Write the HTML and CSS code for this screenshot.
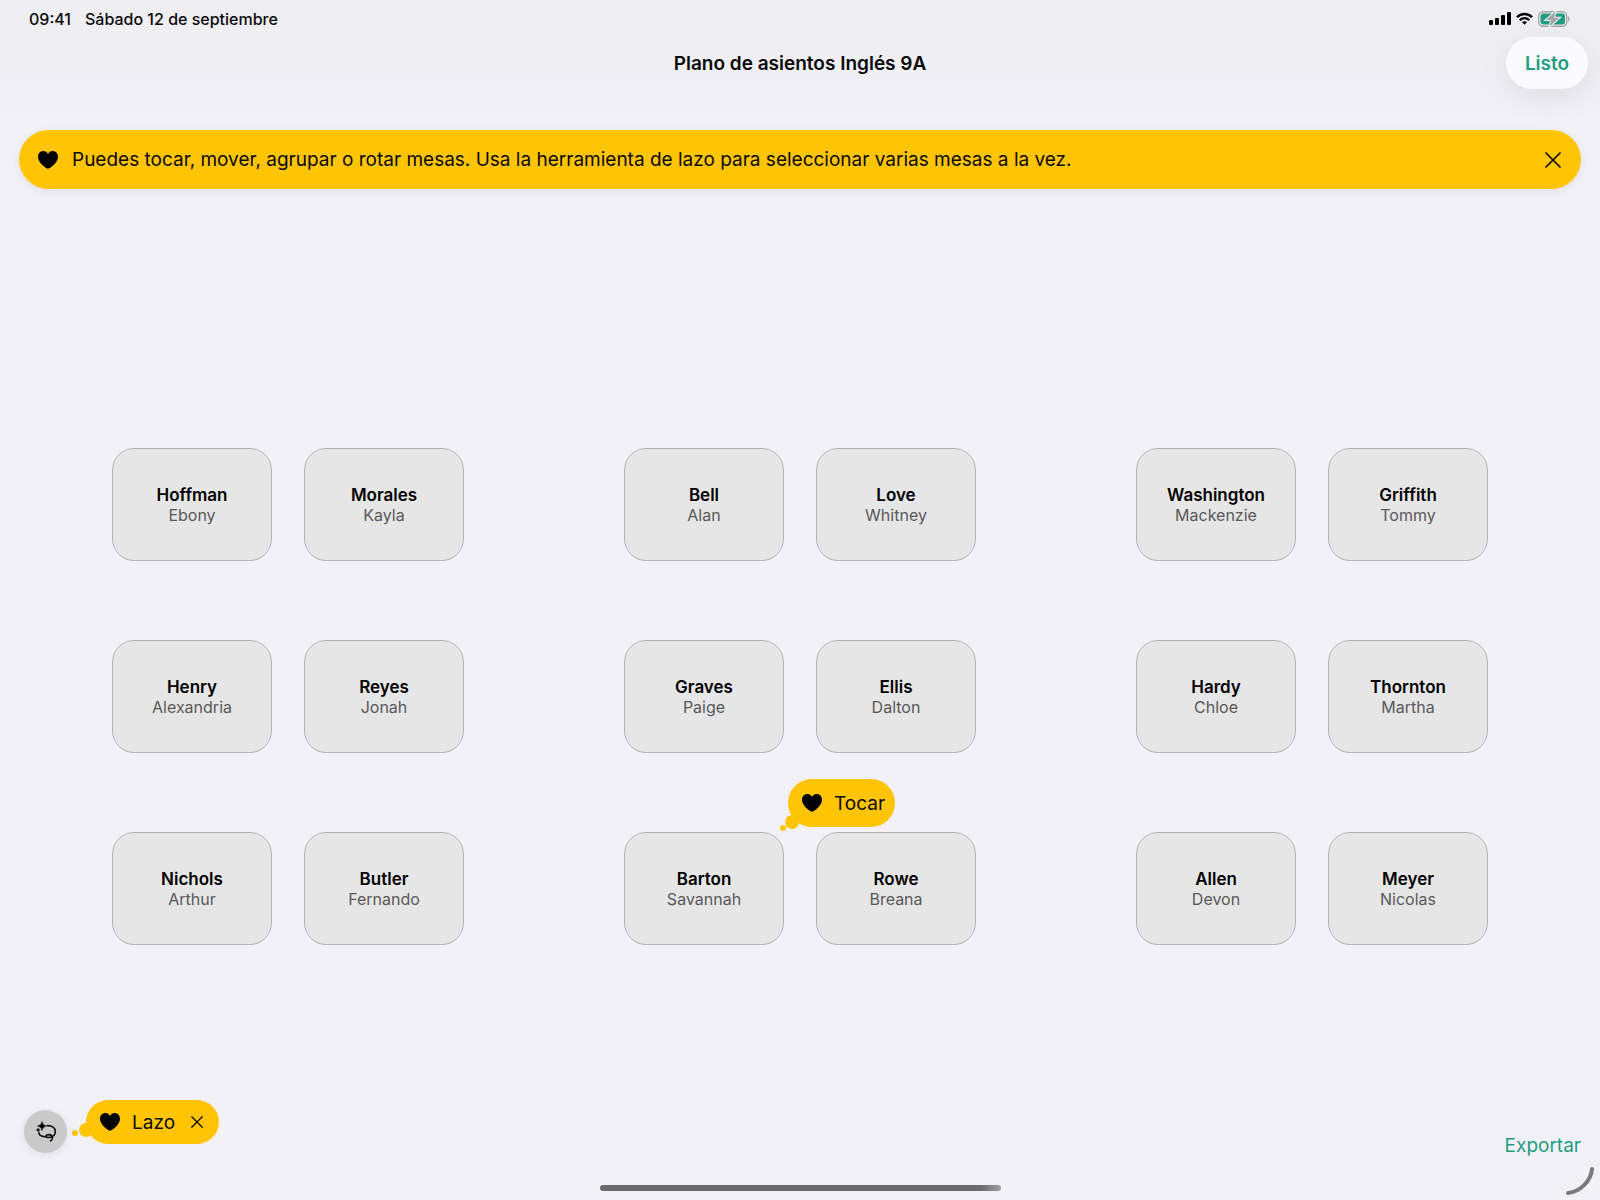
FILE: index.html
```html
<!DOCTYPE html>
<html lang="es">
<head>
<meta charset="utf-8">
<meta name="viewport" content="width=device-width, initial-scale=1">
<title>Plano de asientos Inglés 9A</title>
<link rel="stylesheet" href="styles.css">
</head>
<body>
<svg class="defs" aria-hidden="true">
  <symbol id="heart" viewBox="0 0 20 18"><path d="M10 18C7.500 16.800 0 12 0 5.800C0 2.400 2.300 0 5.300 0C7.400 0 9.100 1.100 10 2.900C10.900 1.100 12.600 0 14.700 0C17.700 0 20 2.400 20 5.800C20 12 12.500 16.800 10 18Z"/></symbol>
  <symbol id="close" viewBox="0 0 16 16"><path d="M1 1L15 15M15 1L1 15" fill="none" stroke="currentColor" stroke-width="1.700" stroke-linecap="round"/></symbol>
</svg>

<div class="status">
  <div class="status-time"><time>09:41</time><span>Sábado 12 de septiembre</span></div>
  <div class="status-icons">
    <svg width="22" height="14" viewBox="0 0 22 14" aria-label="Cobertura"><rect x="0" y="8" width="4" height="5" rx="1"/><rect x="6" y="6" width="4" height="7" rx="1"/><rect x="12" y="3" width="4" height="10" rx="1"/><rect x="18" y="0" width="4" height="13" rx="1"/></svg>
    <svg width="17" height="14" viewBox="0 0 18 14" aria-label="Wi-Fi"><g fill="none" stroke="#090909" stroke-width="2.500"><path d="M1 5.200C5.400 0.600 12.600 0.600 17 5.200"/><path d="M4 8.300C6.800 5.400 11.200 5.400 14 8.300"/></g><path d="M9 13L6.300 10.300C7.800 8.900 10.200 8.900 11.700 10.300Z"/></svg>
    <svg width="32" height="16" viewBox="0 0 32 16" aria-label="Batería cargando"><rect x="0.700" y="0.700" width="28" height="14.600" rx="4.500" fill="none" stroke="#a5a5a8" stroke-width="1.400"/><path d="M30 5.500C32 6 32 10 30 10.500Z" fill="#a5a5a8"/><rect x="2.500" y="2.500" width="24.500" height="11" rx="3" fill="#239d82"/><path d="M17.500 0.500L8 9H13L11.500 15.500L21.500 6.800H16Z" fill="#a5a5a8" stroke="#f0eff4" stroke-width="2" paint-order="stroke"/></svg>
  </div>
</div>

<header class="header">
  <h1>Plano de asientos Inglés 9A</h1>
  <button class="done" type="button">Listo</button>
</header>

<div class="banner" role="status">
  <svg class="heart" aria-hidden="true"><use href="#heart"/></svg>
  <p>Puedes tocar, mover, agrupar o rotar mesas. Usa la herramienta de lazo para seleccionar varias mesas a la vez.</p>
  <button class="plain" type="button" aria-label="Cerrar aviso"><svg class="close" aria-hidden="true"><use href="#close"/></svg></button>
</div>

<main class="room">
  <div class="row">
    <div class="pair"><button class="desk" type="button"><strong>Hoffman</strong><span>Ebony</span></button><button class="desk" type="button"><strong>Morales</strong><span>Kayla</span></button></div>
    <div class="pair"><button class="desk" type="button"><strong>Bell</strong><span>Alan</span></button><button class="desk" type="button"><strong>Love</strong><span>Whitney</span></button></div>
    <div class="pair"><button class="desk" type="button"><strong>Washington</strong><span>Mackenzie</span></button><button class="desk" type="button"><strong>Griffith</strong><span>Tommy</span></button></div>
  </div>
  <div class="row">
    <div class="pair"><button class="desk" type="button"><strong>Henry</strong><span>Alexandria</span></button><button class="desk" type="button"><strong>Reyes</strong><span>Jonah</span></button></div>
    <div class="pair"><button class="desk" type="button"><strong>Graves</strong><span>Paige</span></button><button class="desk" type="button"><strong>Ellis</strong><span>Dalton</span></button></div>
    <div class="pair"><button class="desk" type="button"><strong>Hardy</strong><span>Chloe</span></button><button class="desk" type="button"><strong>Thornton</strong><span>Martha</span></button></div>
  </div>
  <div class="row">
    <div class="pair"><button class="desk" type="button"><strong>Nichols</strong><span>Arthur</span></button><button class="desk" type="button"><strong>Butler</strong><span>Fernando</span></button></div>
    <div class="pair"><button class="desk" type="button"><strong>Barton</strong><span>Savannah</span></button><button class="desk" type="button"><strong>Rowe</strong><span>Breana</span></button>
      <div class="tip tip-tap"><svg class="heart" aria-hidden="true"><use href="#heart"/></svg><span>Tocar</span></div>
    </div>
    <div class="pair"><button class="desk" type="button"><strong>Allen</strong><span>Devon</span></button><button class="desk" type="button"><strong>Meyer</strong><span>Nicolas</span></button></div>
  </div>
</main>

<footer class="tools">
  <button class="lasso" type="button" aria-label="Lazo">
    <svg width="22" height="22" viewBox="0 0 22 22" aria-hidden="true"><path d="M7 0.500Q7.500 4.500 11.500 5Q7.500 5.500 7 9.500Q6.500 5.500 2.500 5Q6.500 4.500 7 0.500Z" stroke="currentColor" stroke-width="0.600"/><path d="M3.200 7Q3.500 8.700 5.200 9Q3.500 9.300 3.200 11Q2.900 9.300 1.200 9Q2.900 8.700 3.200 7Z" stroke="currentColor" stroke-width="0.400"/><path d="M12.500 4.600C17 4.600 20.300 7 20.300 10.500C20.300 14 17.500 16.300 13.500 16.500C10.500 16.600 10 14.500 12.500 13.800C15.500 13.200 17.800 14.500 17.500 17C17.300 18.500 16.500 19.500 15.500 20M10 15.800C6.500 15.500 4 14.200 4 11.800" fill="none" stroke="currentColor" stroke-width="1.600" stroke-linecap="round"/></svg>
  </button>
  <div class="tip tip-lasso">
    <svg class="heart" aria-hidden="true"><use href="#heart"/></svg><span>Lazo</span>
    <button class="plain" type="button" aria-label="Cerrar ayuda"><svg class="close small" aria-hidden="true"><use href="#close"/></svg></button>
  </div>
  <button class="export" type="button">Exportar</button>
</footer>
<div class="home"></div>
<svg class="corner" width="28" height="28" viewBox="0 0 28 28" aria-hidden="true"><path d="M26 2C25 14 14 25 2 26" fill="none" stroke="#7b7b7e" stroke-width="4" stroke-linecap="round"/></svg>
</body>
</html>
```
FILE: styles.css
```css
* { box-sizing: border-box; }

body {
  margin: 0;
  min-height: 100vh;
  display: flex;
  flex-direction: column;
  position: relative;
  background: #f2f1f7 linear-gradient(#efeef3, #efeef3 56px, #f2f1f7 120px) no-repeat;
  color: #090909;
  font-family: Inter, "Liberation Sans", sans-serif;
  font-size: 19px;
}

button {
  font: inherit;
  color: inherit;
  border: 0;
  padding: 0;
  background: none;
}

svg { display: block; flex: none; }
.defs { position: absolute; width: 0; height: 0; }
.heart { width: 20px; height: 18px; }
.close { width: 16px; height: 16px; }
.close.small { width: 12px; height: 12px; }

.status {
  height: 37px;
  padding: 0 30px 0 29px;
  display: flex;
  align-items: center;
  justify-content: space-between;
  font-size: 16px;
  font-weight: 500;
}
.status-time { display: flex; gap: 14px; }
.status-icons { display: flex; align-items: center; gap: 5px; }

.header {
  padding: 0 12px;
  display: grid;
  grid-template-columns: 1fr auto 1fr;
  align-items: center;
}
.header h1 {
  grid-column: 2;
  margin: 0;
  font-size: 19px;
  font-weight: 600;
}
.done {
  justify-self: end;
  width: 82px;
  height: 52px;
  border-radius: 26px;
  background: #fbfaff;
  box-shadow: 0 8px 32px rgba(0, 0, 0, 0.08);
  color: #239d82;
  font-weight: 600;
}

.banner {
  margin: 41px 19px 0;
  min-height: 59px;
  padding: 0 20px 0 19px;
  display: flex;
  align-items: center;
  gap: 14px;
  border-radius: 30px;
  background: #ffc504;
  box-shadow: 0 2px 8px rgba(0, 0, 0, 0.08);
}
.banner p { margin: 0; flex: 1; }

.room {
  padding: 259px 112px 0;
  display: flex;
  flex-direction: column;
  gap: 79px;
}
.row { display: flex; justify-content: space-between; }
.pair { position: relative; display: flex; gap: 32px; }
.desk {
  width: 160px;
  height: 113px;
  display: flex;
  flex-direction: column;
  align-items: center;
  justify-content: center;
  border: 1px solid #b4b4b4;
  border-radius: 22px;
  background: #e6e6e6;
  line-height: 20px;
}
.desk strong { font-size: 17px; font-weight: 600; color: #000; }
.desk span { font-size: 16px; color: #58585a; }

.tip {
  position: relative;
  display: flex;
  align-items: center;
  gap: 12px;
  padding: 0 12px 0 14px;
  height: 48px;
  border-radius: 24px;
  background: #ffc504;
}
.tip::before,
.tip::after {
  content: "";
  position: absolute;
  border-radius: 50%;
  background: #ffc504;
}
.tip::before { width: 14px; height: 14px; }
.tip::after { width: 6px; height: 6px; }
.tip-tap { position: absolute; left: 164px; bottom: 118px; padding-right: 10px; }
.tip-tap::before { left: -3px; bottom: -2px; }
.tip-tap::after { left: -8px; bottom: -4px; }

.tools {
  margin-top: auto;
  padding: 0 19px 0 24px;
  display: flex;
  align-items: flex-end;
}
.lasso {
  width: 43px;
  height: 43px;
  display: grid;
  place-items: center;
  border-radius: 50%;
  background: #cacaca;
  box-shadow: 0 2px 8px rgba(0, 0, 0, 0.08);
}
.tip-lasso {
  height: 44px;
  margin: 0 auto 9px 19px;
  padding-right: 16px;
}
.tip-lasso .plain { margin-left: 4px; }
.tip-lasso::before { left: -7px; bottom: 7px; }
.tip-lasso::after { left: -14px; bottom: 8px; }
.export { color: #239d82; line-height: 24px; margin-bottom: -5px; }

.home {
  width: 401px;
  height: 6px;
  margin: 32px auto 9px;
  border-radius: 3px;
  background: linear-gradient(90deg, #6b6b6b 95%, #a0a0a0);
}
.corner { position: absolute; right: 6px; bottom: 5px; }
```
